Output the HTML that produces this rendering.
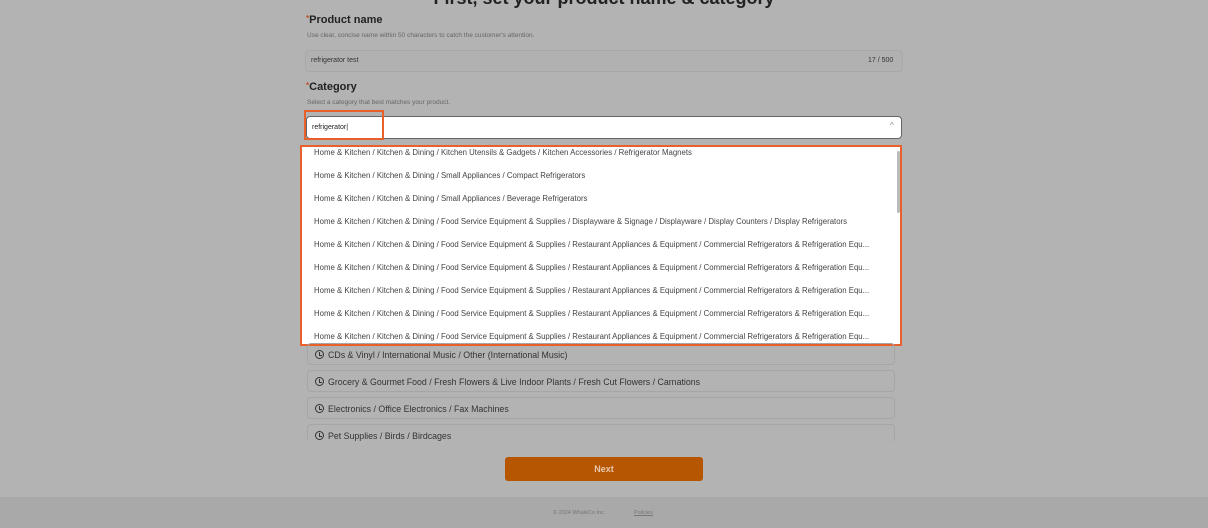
<!DOCTYPE html>
<html><head><style>
body{margin:0;width:1208px;height:528px;background:#b3b3b3;font-family:"Liberation Sans",sans-serif;position:relative;overflow:hidden;color:#222}
.a{position:absolute}
.t{font-size:8px;color:#555}
.box{border:1px solid #a8a8a8;border-radius:4px;background:#b1b1b1}
.row{position:absolute;left:12px;font-size:7.8px;color:#444;white-space:nowrap}
.hist{position:absolute;left:307px;width:588px;height:22px;border:1px solid #a6a6a6;border-radius:4px;font-size:8.8px;color:#333;line-height:22px;box-sizing:border-box;padding-left:20px}
.hist:before{content:"";position:absolute;left:7px;top:6px;width:7px;height:7px;border:1.3px solid #333;border-radius:50%}
.hist:after{content:"";position:absolute;left:11px;top:8px;width:2px;height:3px;border-left:1.2px solid #333;border-bottom:1.2px solid #333}
</style></head><body>
<div class="a" style="left:0;top:-12px;width:1208px;text-align:center;font-weight:bold;font-size:18px;color:#222">First, set your product name &amp; category</div>
<div class="a" style="left:306px;top:14px;font-size:11px;font-weight:bold"><span style="color:#c0502a;font-size:8px;vertical-align:top">*</span>Product name</div>
<div class="a t" style="left:307px;top:32px;font-size:6.5px;color:#666">Use clear, concise name within 50 characters to catch the customer's attention.</div>
<div class="a box" style="left:305px;top:50px;width:596px;height:20px"></div>
<div class="a" style="left:311px;top:57px;font-size:7px;color:#333">refrigerator test</div>
<div class="a" style="left:868px;top:57px;font-size:7px;color:#333">17 / 500</div>
<div class="a" style="left:306px;top:81px;font-size:11px;font-weight:bold"><span style="color:#c0502a;font-size:8px;vertical-align:top">*</span>Category</div>
<div class="a t" style="left:307px;top:99px;font-size:6.5px;color:#666">Select a category that best matches your product.</div>
<div class="a" style="left:306px;top:116px;width:594px;height:21px;background:#fff;border:1px solid #666;border-radius:4px"></div>
<div class="a" style="left:312px;top:124px;font-size:7px;color:#222">refrigerator|</div>
<div class="a" style="left:890px;top:121px;font-size:8px;color:#888">^</div>
<div class="a" style="left:304px;top:110px;width:80px;height:30px;border:2px solid #e8602c;box-sizing:border-box"></div>
<div class="a" style="left:300px;top:145px;width:602px;height:201px;background:#fff;border:2px solid #e8602c;box-sizing:border-box;overflow:hidden">
<div class="row" style="top:1px">Home &amp; Kitchen / Kitchen &amp; Dining / Kitchen Utensils &amp; Gadgets / Kitchen Accessories / Refrigerator Magnets</div>
<div class="row" style="top:24px">Home &amp; Kitchen / Kitchen &amp; Dining / Small Appliances / Compact Refrigerators</div>
<div class="row" style="top:47px">Home &amp; Kitchen / Kitchen &amp; Dining / Small Appliances / Beverage Refrigerators</div>
<div class="row" style="top:70px">Home &amp; Kitchen / Kitchen &amp; Dining / Food Service Equipment &amp; Supplies / Displayware &amp; Signage / Displayware / Display Counters / Display Refrigerators</div>
<div class="row" style="top:93px">Home &amp; Kitchen / Kitchen &amp; Dining / Food Service Equipment &amp; Supplies / Restaurant Appliances &amp; Equipment / Commercial Refrigerators &amp; Refrigeration Equ...</div>
<div class="row" style="top:116px">Home &amp; Kitchen / Kitchen &amp; Dining / Food Service Equipment &amp; Supplies / Restaurant Appliances &amp; Equipment / Commercial Refrigerators &amp; Refrigeration Equ...</div>
<div class="row" style="top:139px">Home &amp; Kitchen / Kitchen &amp; Dining / Food Service Equipment &amp; Supplies / Restaurant Appliances &amp; Equipment / Commercial Refrigerators &amp; Refrigeration Equ...</div>
<div class="row" style="top:162px">Home &amp; Kitchen / Kitchen &amp; Dining / Food Service Equipment &amp; Supplies / Restaurant Appliances &amp; Equipment / Commercial Refrigerators &amp; Refrigeration Equ...</div>
<div class="row" style="top:185px">Home &amp; Kitchen / Kitchen &amp; Dining / Food Service Equipment &amp; Supplies / Restaurant Appliances &amp; Equipment / Commercial Refrigerators &amp; Refrigeration Equ...</div>
<div class="a" style="left:595px;top:4px;width:3px;height:62px;background:#bbb;border-radius:2px"></div>
</div>
<div class="hist" style="top:343px">CDs &amp; Vinyl / International Music / Other (International Music)</div>
<div class="hist" style="top:370px">Grocery &amp; Gourmet Food / Fresh Flowers &amp; Live Indoor Plants / Fresh Cut Flowers / Carnations</div>
<div class="hist" style="top:397px">Electronics / Office Electronics / Fax Machines</div>
<div class="hist" style="top:424px;height:18px;border-bottom:none">Pet Supplies / Birds / Birdcages</div>
<div class="a" style="left:505px;top:457px;width:198px;height:24px;background:#b65600;border-radius:3px;color:#e8c9b0;font-size:9px;font-weight:bold;text-align:center;line-height:24px">Next</div>
<div class="a" style="left:0;top:497px;width:1208px;height:31px;background:#a9a9a9"></div>
<div class="a" style="left:553px;top:510px;font-size:5.5px;color:#777">© 2024 WhaleCo Inc.</div>
<div class="a" style="left:634px;top:510px;font-size:5.5px;color:#777;text-decoration:underline">Policies</div>
</body></html>
